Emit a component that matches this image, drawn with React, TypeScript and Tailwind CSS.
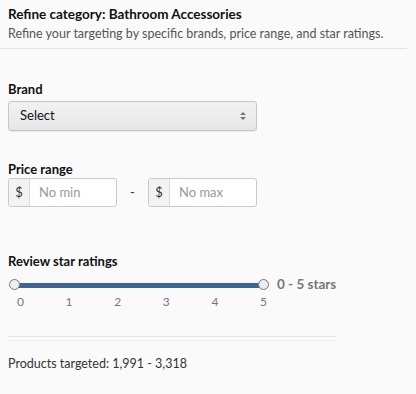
const ticks = ['0', '1', '2', '3', '4', '5'];

export default function App() {
  return (
    <div className="min-h-[394px] w-[416px] bg-[#fafafa] font-['Lato',sans-serif] text-[#111]">
      {/* Header */}
      <div className="mr-[9px] border-b border-[#e3e3e3] px-2 pt-[5px] pb-[6px]">
        <h1 className="whitespace-nowrap text-[13.5px] font-bold leading-[18px]">Refine category: Bathroom Accessories</h1>
        <p className="mt-[2px] whitespace-nowrap text-[12.5px] leading-[17px] text-[#555]">
          Refine your targeting by specific brands, price range, and star ratings.
        </p>
      </div>

      <div className="px-2">
        {/* Brand */}
        <div className="mt-[31px]">
          <div className="text-[13px] font-bold leading-[18px]">Brand</div>
          <button className="mt-[3px] flex h-[30px] w-[249px] items-center justify-between rounded-[3px] border border-[#c6c6c6] bg-gradient-to-b from-[#f2f2f2] to-[#e6e6e6] pl-[11px] pr-[10px] text-[13px] text-[#111] shadow-[0_1px_0_rgba(0,0,0,0.05)]">
            <span>Select</span>
            <svg width="6" height="8" viewBox="0 0 6 8" className="fill-[#777]">
              <path d="M3 0 L6 3 H0 Z M0 5 H6 L3 8 Z" />
            </svg>
          </button>
        </div>

        {/* Price range */}
        <div className="mt-[29px]">
          <div className="text-[13px] font-bold leading-[18px]">Price range</div>
          <div className="flex items-center">
            <div className="flex h-[29px] w-[109px] overflow-hidden rounded-[3px] border border-[#c9c9c9] bg-white">
              <span className="flex w-[21px] items-center justify-center border-r border-[#dcdcdc] bg-[#f3f3f3] text-[13px] font-normal text-[#333]">$</span>
              <span className="flex items-center pl-[9px] text-[13px] text-[#999]">No min</span>
            </div>
            <span className="mx-[13px] w-[5px] text-center text-[13px] text-[#333]">-</span>
            <div className="flex h-[29px] w-[109px] overflow-hidden rounded-[3px] border border-[#c9c9c9] bg-white">
              <span className="flex w-[21px] items-center justify-center border-r border-[#dcdcdc] bg-[#f3f3f3] text-[13px] font-normal text-[#333]">$</span>
              <span className="flex items-center pl-[9px] text-[13px] text-[#999]">No max</span>
            </div>
          </div>
        </div>

        {/* Review star ratings */}
        <div className="mt-[45px]">
          <div className="text-[13px] font-bold leading-[18px]">Review star ratings</div>
          <div className="mt-[9px] flex h-[12px] items-center">
            <div className="relative ml-[1px] h-[12px] w-[260px]">
              <div className="absolute left-[5px] right-[5px] top-[4px] h-[5px] bg-[#3f6796]" />
              <div className="absolute left-0 top-0 h-[11px] w-[11px] rounded-full border border-[#777] bg-[#eee]" />
              <div className="absolute right-0 top-0 h-[11px] w-[11px] rounded-full border border-[#777] bg-[#eee]" />
            </div>
            <span className="ml-[8px] text-[13.5px] font-bold leading-none text-[#777]">0 - 5 stars</span>
          </div>
          <div className="mt-[4px] flex w-[259px] justify-between pl-[9px] text-[12px] leading-[14px] text-[#777]">
            {ticks.map((t) => (
              <span key={t}>{t}</span>
            ))}
          </div>
        </div>

        {/* Footer */}
        <div className="mt-[27px] h-[5px] w-[328px] border-t border-b border-t-[#e4e4e4] border-b-[#f1f1f1]" />
        <div className="mt-[14px] text-[12.5px] leading-[18px] text-[#333]">Products targeted: 1,991 - 3,318</div>
      </div>
    </div>
  );
}
